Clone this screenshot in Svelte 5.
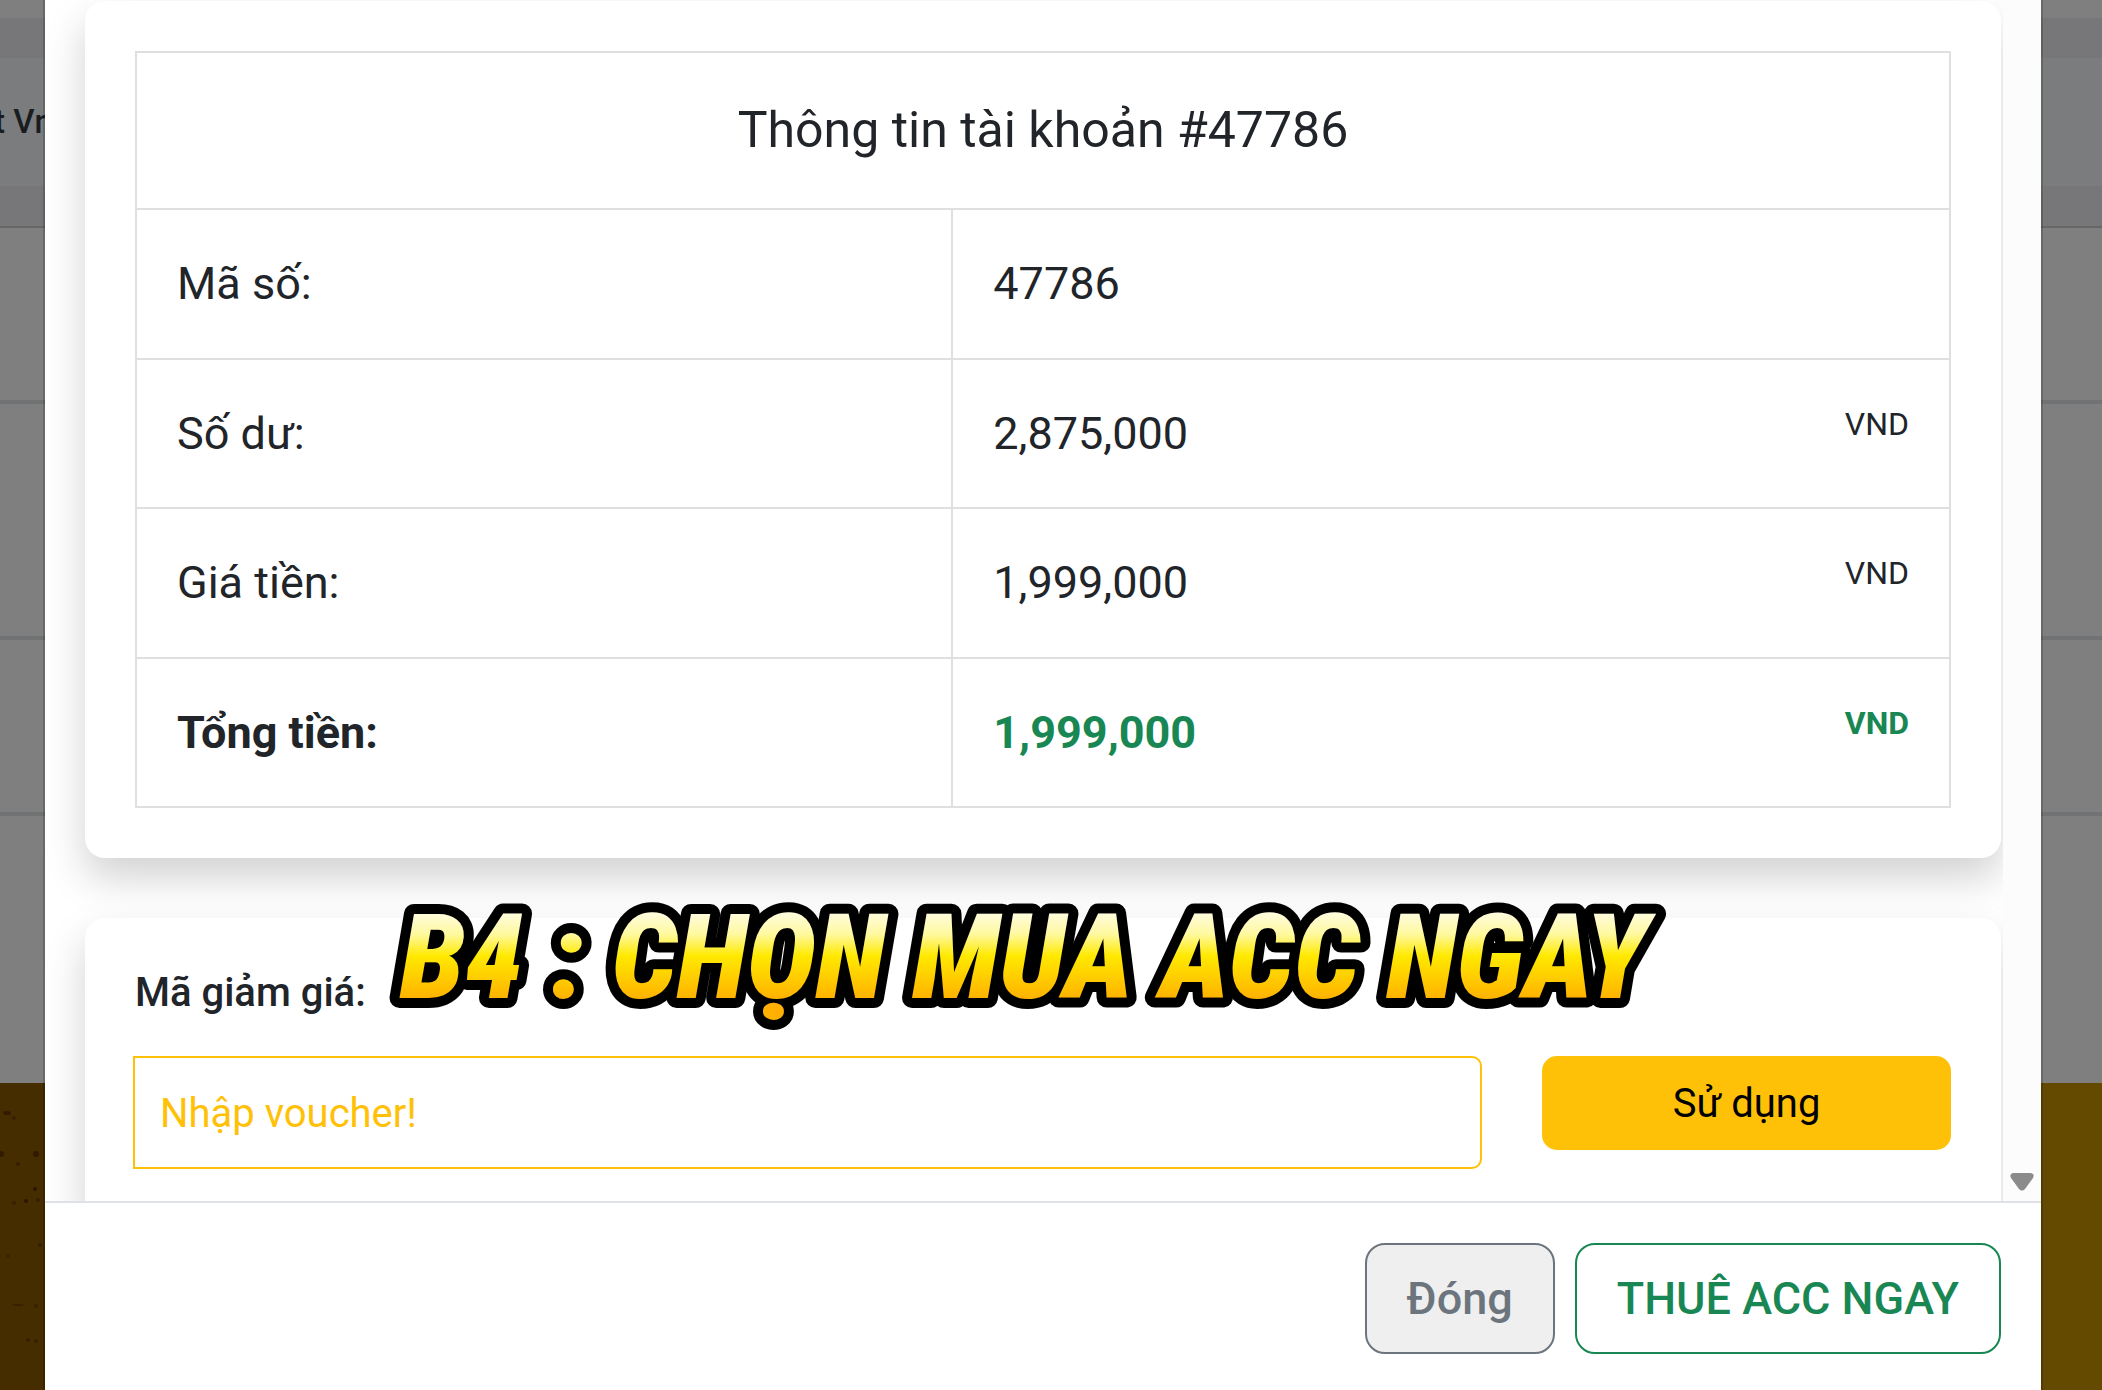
<script lang="ts">
	type Row = { label: string; value: string; unit?: string; total?: boolean };

	const accountId = '47786';

	const rows: Row[] = [
		{ label: 'Mã số:', value: accountId },
		{ label: 'Số dư:', value: '2,875,000', unit: 'VND' },
		{ label: 'Giá tiền:', value: '1,999,000', unit: 'VND' },
		{ label: 'Tổng tiền:', value: '1,999,000', unit: 'VND', total: true }
	];

	let voucher = $state('');
</script>

<div class="page">
	<div class="backdrop">
		<div class="bar bar-top"></div>
		<div class="bar nav">t Vn</div>
		<div class="bar bar-bottom"></div>
		<div class="line first"></div>
		<div class="line second"></div>
		<div class="line third"></div>
		<div class="line fourth"></div>
		<div class="ground">
			<svg class="specks" width="45" height="307" aria-hidden="true">
				<g fill="#2b1500">
					<ellipse cx="7" cy="30" rx="4" ry="2" opacity="0.7" />
					<circle cx="14" cy="35" r="2" opacity="0.5" />
					<circle cx="1" cy="71" r="3" opacity="0.8" />
					<circle cx="36" cy="71" r="3" opacity="0.8" />
					<circle cx="18" cy="81" r="2" opacity="0.6" />
					<circle cx="35" cy="106" r="2" />
					<circle cx="26" cy="118" r="2" />
					<circle cx="38" cy="117" r="2" opacity="0.6" />
					<circle cx="14" cy="120" r="2" opacity="0.5" />
					<circle cx="40" cy="162" r="2" opacity="0.6" />
					<circle cx="8" cy="173" r="2" opacity="0.4" />
					<ellipse cx="18" cy="222" rx="6" ry="1" opacity="0.5" />
					<circle cx="36" cy="223" r="2" opacity="0.5" />
					<circle cx="28" cy="257" r="2" opacity="0.6" />
					<circle cx="36" cy="258" r="2" opacity="0.6" />
				</g>
			</svg>
		</div>
	</div>

	<div class="modal" role="dialog" aria-label="Thông tin tài khoản">
		<div class="modal-body">
			<div class="content">
				<section class="card">
					<table>
						<colgroup>
							<col class="name" />
							<col />
						</colgroup>
						<thead>
							<tr>
								<th colspan="2">Thông tin tài khoản #{accountId}</th>
							</tr>
						</thead>
						<tbody>
							{#each rows as row}
								<tr class:total={row.total}>
									<td>{row.label}</td>
									<td class="value">
										{#if row.unit}
											<span class="unit">{row.unit}</span>
										{/if}
										{row.value}
									</td>
								</tr>
							{/each}
						</tbody>
					</table>
				</section>

				<section class="card">
					<label for="voucher">Mã giảm giá:</label>
					<div class="voucher-row">
						<input id="voucher" type="text" placeholder="Nhập voucher!" bind:value={voucher} />
						<button type="button" class="apply">Sử dụng</button>
					</div>

					<svg class="banner" width="1290" height="160" aria-label="B4 : CHỌN MUA ACC NGAY">
						<defs>
							<linearGradient id="gold" gradientUnits="userSpaceOnUse" x1="0" y1="34" x2="0" y2="122">
								<stop offset="0" stop-color="#fffce0" />
								<stop offset="0.25" stop-color="#fff9a0" />
								<stop offset="0.5" stop-color="#ffe900" />
								<stop offset="1" stop-color="#ffb000" />
							</linearGradient>
						</defs>
						<text x="15" y="120">B4 : CHỌN MUA ACC NGAY</text>
					</svg>
				</section>
			</div>

			<div class="scrollbar" aria-hidden="true">
				<svg width="24" height="18" viewBox="0 0 24 18">
					<path
						d="M3 0H21Q25 1 23 5L15 16Q12 19 9 16L1 5Q-1 1 3 0Z"
						fill="#8b8b8b"
					/>
				</svg>
			</div>
		</div>

		<div class="modal-footer">
			<button type="button" class="close">Đóng</button>
			<button type="button" class="rent">THUÊ ACC NGAY</button>
		</div>
	</div>
</div>

<style>
	:global(body) {
		margin: 0;
	}
	.page {
		display: grid;
		grid-template-rows: 100vh;
		overflow: hidden;
		font-family: Roboto, sans-serif;
		font-size: 45px;
		line-height: 1.5;
		color: #212529;
	}
	.page * {
		box-sizing: border-box;
	}
	.backdrop,
	.modal {
		grid-area: 1 / 1;
		min-width: 0;
	}

	.backdrop {
		display: flex;
		flex-direction: column;
		overflow: hidden;
		padding-top: 18px;
		background: #7f7f7f;
	}
	.bar {
		flex: none;
		height: 40px;
		background: #777779;
	}
	.bar.nav {
		height: 128px;
		background: #7b7c7e;
		color: #191c21;
		font-size: 33px;
		font-weight: 500;
		line-height: 128px;
		text-indent: -6px;
	}
	.page .bar-bottom {
		box-sizing: content-box;
		border-bottom: 2px solid #676767;
	}
	.line {
		flex: none;
		border-bottom: 4px solid #707274;
	}
	.first {
		height: 176px;
	}
	.second {
		height: 236px;
	}
	.third {
		height: 176px;
	}
	.fourth {
		height: 267px;
		border-bottom: none;
	}
	.ground {
		flex: 1;
		background: linear-gradient(90deg, #452d00 50%, #644a00 50%);
	}
	.specks {
		display: block;
	}

	.modal {
		display: flex;
		flex-direction: column;
		margin: 0 61px 0 45px;
		background: #fff;
		box-shadow: 0 0 0 2px rgba(0, 0, 0, 0.18);
	}
	.modal-body {
		display: flex;
		flex: 1;
		min-height: 0;
	}
	.content {
		flex: 1;
		min-width: 0;
		overflow: hidden;
		padding: 1px 2px 0 40px;
	}
	.card {
		position: relative;
		margin-bottom: 60px;
		padding: 50px;
		border-radius: 20px;
		background: #fff;
		box-shadow: 0 20px 40px rgba(0, 0, 0, 0.18);
	}

	table {
		width: 100%;
		border-collapse: collapse;
		table-layout: fixed;
	}
	th,
	td {
		padding: 40px;
		border: 2px solid #dedfe0;
		text-align: left;
	}
	th {
		font-size: 50px;
		font-weight: 400;
		text-align: center;
	}
	.name {
		width: 45%;
	}
	.unit {
		float: right;
		font-size: 32px;
	}
	.total {
		font-weight: 700;
	}
	.total .value {
		color: #198754;
	}

	label {
		display: block;
		margin-bottom: 38px;
		font-size: 40px;
		font-weight: 500;
		line-height: 50px;
	}
	.voucher-row {
		display: grid;
		grid-template-columns: minmax(0, 33fr) 10fr;
		align-items: start;
		gap: 60px;
		margin-left: -2px;
	}
	input {
		min-width: 0;
		height: 113px;
		padding: 2px 25px 0;
		border: 2px solid #ffc107;
		border-radius: 0 10px 10px 0;
		background: #fff;
		color: #212529;
		font: inherit;
		font-size: 40px;
	}
	input::placeholder {
		color: #ffc107;
		opacity: 1;
	}
	button {
		font: inherit;
	}
	.apply {
		height: 94px;
		padding: 2px 20px 0;
		border: none;
		border-radius: 15px;
		background: #ffc107;
		color: #000;
		font-size: 40px;
	}

	.banner {
		position: absolute;
		top: -40px;
		left: 300px;
		overflow: visible;
		pointer-events: none;
	}
	.banner text {
		font-family: 'Roboto Condensed', 'Liberation Sans Narrow', sans-serif;
		font-size: 118px;
		font-style: italic;
		font-weight: 900;
		fill: url(#gold);
		stroke: #000;
		stroke-width: 20px;
		stroke-linejoin: round;
		paint-order: stroke;
	}

	.scrollbar {
		display: flex;
		flex: none;
		align-items: flex-end;
		justify-content: center;
		width: 38px;
		padding-bottom: 10px;
		background: #fcfcfc;
	}

	.modal-footer {
		display: flex;
		justify-content: flex-end;
		gap: 20px;
		padding: 40px 40px 36px;
		border-top: 2px solid #dee2e6;
	}
	.modal-footer button {
		padding: 20px 40px;
		border: 2px solid;
		border-radius: 20px;
		font-weight: 500;
	}
	.close {
		border-color: #6c757d;
		background: #efefef;
		color: #6c757d;
	}
	.rent {
		border-color: #198754;
		background: #fff;
		color: #198754;
	}
</style>
